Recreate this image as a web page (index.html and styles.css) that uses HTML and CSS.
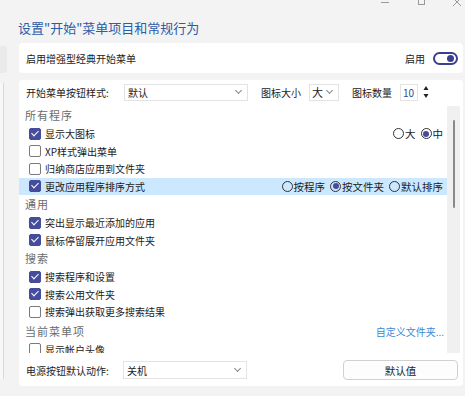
FILE: index.html
```html
<!DOCTYPE html>
<html>
<head>
    <title>开始菜单设置</title>
    <link rel="stylesheet" href="styles.css">
</head>
<body>
    <div class="titlebar">
        <span class="win-btn"><svg width="10" height="10" viewBox="0 0 10 10"><path d="M1 4.5h8" stroke="#999" stroke-width="1"/></svg></span>
        <span class="win-btn"><svg width="10" height="10" viewBox="0 0 10 10"><rect x="2.5" y="0.5" width="6" height="6" fill="none" stroke="#999"/></svg></span>
        <span class="win-btn"><svg width="10" height="10" viewBox="0 0 10 10"><path d="M1 0l8 8M9 0l-8 8" stroke="#999" stroke-width="1"/></svg></span>
    </div>

    <div class="layout">
        <div class="side">
            <div class="side-top"></div>
            <div class="side-panel"></div>
        </div>

        <div class="content">
            <h1 class="page-title">设置"开始"菜单项目和常规行为</h1>

            <div class="card card-toggle">
                <span>启用增强型经典开始菜单</span>
                <span class="toggle-wrap">启用 <span class="toggle"><span class="knob"></span></span></span>
            </div>

            <div class="card card-main">
                <div class="options-row">
                    <span class="label label-first">开始菜单按钮样式:</span>
                    <div class="select select-wide">默认<span class="chev"></span></div>
                    <span class="label label-gap">图标大小</span>
                    <div class="select select-small">大<span class="chev"></span></div>
                    <span class="label label-gap">图标数量</span>
                    <div class="spin">10</div>
                    <span class="spin-arrows"><svg width="6" height="14" viewBox="0 0 6 14"><path d="M3 1L5.5 5H0.5z" fill="#222"/><path d="M3 13L5.5 9H0.5z" fill="#222"/></svg></span>
                </div>

                <div class="list-box">
                    <div class="list">
                        <div class="group">所有程序</div>
                        <div class="item">
                            <span class="check on"></span>显示大图标
                            <span class="radios">
                                <span class="radio"></span>大
                                <span class="radio on"></span>中
                            </span>
                        </div>
                        <div class="item"><span class="check"></span>XP样式弹出菜单</div>
                        <div class="item"><span class="check"></span>归纳商店应用到文件夹</div>
                        <div class="item selected">
                            <span class="check on"></span>更改应用程序排序方式
                            <span class="radios">
                                <span class="radio"></span>按程序
                                <span class="radio on"></span>按文件夹
                                <span class="radio"></span>默认排序
                            </span>
                        </div>

                        <div class="group">通用</div>
                        <div class="item"><span class="check on"></span>突出显示最近添加的应用</div>
                        <div class="item"><span class="check on"></span>鼠标停留展开应用文件夹</div>

                        <div class="group">搜索</div>
                        <div class="item"><span class="check on"></span>搜索程序和设置</div>
                        <div class="item"><span class="check on"></span>搜索公用文件夹</div>
                        <div class="item"><span class="check"></span>搜索弹出获取更多搜索结果</div>

                        <div class="group group-link">当前菜单项<a class="link">自定义文件夹...</a></div>
                        <div class="item"><span class="check"></span>显示帐户头像</div>
                    </div>
                    <div class="scrollbar"><div class="thumb"></div></div>
                </div>

                <div class="bottom-row">
                    <span class="label label-first">电源按钮默认动作:</span>
                    <div class="select select-wide">关机<span class="chev"></span></div>
                    <button class="default-btn">默认值</button>
                </div>
            </div>
        </div>
    </div>
</body>
</html>
```

FILE: styles.css
```css
body {
    margin: 0;
    background-color: #f3f3f3;
    font-family: "Noto Sans CJK SC", "Microsoft YaHei", sans-serif;
    font-size: 10px;
    color: #1b1b1b;
    width: 465px;
    height: 396px;
    overflow: hidden;
}
.titlebar {
    height: 10px;
    display: flex;
    justify-content: flex-end;
    align-items: flex-start;
    gap: 26px;
    padding-right: 3px;
    margin-top: -2px;
}
.win-btn {
    display: flex;
}
.layout {
    display: flex;
}
.side {
    width: 7px;
    padding-top: 38px;
}
.side-top {
    height: 27px;
    background-color: #eaeaea;
    border-radius: 0 3px 3px 0;
}
.side-panel {
    margin-top: 10px;
    height: 296px;
    border-right: 1px solid #d8d8d8;
    width: 3px;
    background-color: #f8f8f8;
}
.content {
    width: 444px;
    margin-left: 12px;
}
.page-title {
    margin: 0 0 0 -1px;
    height: 32px;
    padding-top: 10px;
    box-sizing: border-box;
    font-size: 13px;
    font-weight: normal;
    color: #2c5ba8;
    line-height: 20px;
}
.card {
    background-color: #fff;
    border-radius: 4px;
}
.card-toggle {
    margin-top: 3px;
    height: 30px;
    display: flex;
    align-items: center;
    justify-content: space-between;
    padding: 0 5px 0 7px;
}
.toggle-wrap {
    display: flex;
    align-items: center;
    gap: 8px;
}
.toggle {
    width: 19px;
    height: 9px;
    border: 2px solid #3a3f8f;
    border-radius: 7px;
    display: flex;
    align-items: center;
    justify-content: flex-end;
    padding-right: 2px;
}
.knob {
    width: 7px;
    height: 7px;
    border-radius: 50%;
    background-color: #3a3f8f;
}
.card-main {
    margin-top: 7px;
    height: 306px;
    padding-top: 3px;
    box-sizing: border-box;
}
.options-row {
    display: flex;
    align-items: center;
    height: 18px;
    padding-left: 7px;
}
.label {
    white-space: nowrap;
}
.label-first {
    width: 98px;
}
.label-gap {
    margin-left: 13px;
    margin-right: 8px;
}
.select {
    height: 17px;
    border: 1px solid #e3e3e3;
    box-sizing: border-box;
    display: flex;
    align-items: center;
    justify-content: space-between;
    padding: 0 6px 0 3px;
}
.select-wide {
    width: 124px;
}
.select-small {
    width: 30px;
    padding-left: 2px;
    font-size: 11px;
}
.chev {
    width: 4px;
    height: 4px;
    border-right: 1px solid #888;
    border-bottom: 1px solid #888;
    transform: rotate(45deg);
    margin-top: -3px;
}
.spin {
    width: 18px;
    height: 17px;
    border: 1px solid #e3e3e3;
    box-sizing: border-box;
    color: #2c4a9c;
    display: flex;
    align-items: center;
    padding-left: 2px;
}
.spin-arrows {
    display: flex;
    margin-left: 5px;
}
.list-box {
    display: flex;
    margin-top: 5px;
    height: 247px;
    overflow: hidden;
}
.list {
    width: 428px;
}
.group {
    height: 19px;
    line-height: 19px;
    padding-left: 6px;
    font-size: 11px;
    color: #6b6b6b;
    letter-spacing: 1px;
}
.group-link {
    display: flex;
    justify-content: space-between;
    padding-right: 3px;
    margin-top: 1px;
}
.link {
    font-size: 10px;
    color: #3a88d8;
    letter-spacing: 0;
}
.item {
    height: 17.5px;
    display: flex;
    align-items: center;
    padding-left: 10px;
}
.item.selected {
    background-color: #cce8ff;
}
.check {
    width: 12px;
    height: 12px;
    box-sizing: border-box;
    border: 1px solid #7a7a7a;
    border-radius: 2px;
    margin-right: 4px;
    background-color: #fff;
    position: relative;
}
.check.on {
    background-color: #454c9c;
    border-color: #454c9c;
}
.check.on::after {
    content: "";
    position: absolute;
    left: 3px;
    top: 0px;
    width: 3px;
    height: 6px;
    border-right: 1.5px solid #fff;
    border-bottom: 1.5px solid #fff;
    transform: rotate(45deg);
}
.radios {
    margin-left: auto;
    display: flex;
    align-items: center;
    padding-right: 4px;
    font-size: 10.5px;
}
.radio {
    width: 11px;
    height: 11px;
    box-sizing: border-box;
    border: 1px solid #333;
    border-radius: 50%;
    margin-left: 5px;
    margin-right: 1px;
    position: relative;
}
.radio.on::after {
    content: "";
    position: absolute;
    left: 1.5px;
    top: 1.5px;
    width: 6px;
    height: 6px;
    border-radius: 50%;
    background-color: #454c9c;
}
.scrollbar {
    width: 13px;
    background-color: #f0f0f0;
    display: flex;
    justify-content: center;
}
.thumb {
    width: 2px;
    height: 88px;
    margin-top: 14px;
    background-color: #8a8a8a;
    border-radius: 1px;
}
.bottom-row {
    display: flex;
    align-items: center;
    margin-top: 7px;
    height: 20px;
    padding-left: 7px;
}
.bottom-row .label-first {
    width: 97px;
}
.bottom-row .select-wide {
    height: 18px;
}
.default-btn {
    margin-left: auto;
    margin-right: 5px;
    width: 115px;
    height: 20px;
    font-family: inherit;
    font-size: 10.5px;
    background-color: #fdfdfd;
    border: 1px solid #d0d0d0;
    border-radius: 4px;
    color: #1b1b1b;
}
```
